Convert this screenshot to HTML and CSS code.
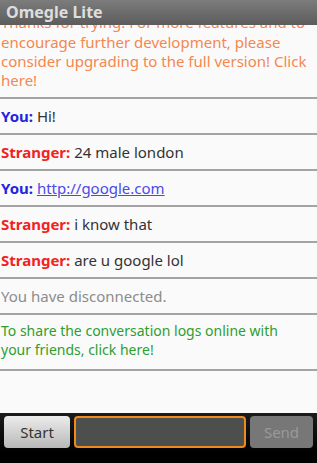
FILE: index.html
```html
<!DOCTYPE html>
<html>
<head>
<meta charset="utf-8">
<link rel="stylesheet" href="styles.css">
</head>
<body>
<div class="app">
  <div class="titlebar">Omegle Lite</div>
  <div class="log">
    <div class="list">
      <div class="row notice"><span class="hidden-line">Thanks for trying. For more features and to</span><br>encourage further development, please consider upgrading to the full version! Click here!</div>
      <div class="row"><span class="you">You:</span> Hi!</div>
      <div class="row"><span class="stranger">Stranger:</span> 24 male london</div>
      <div class="row"><span class="you">You:</span> <a class="link" href="#">http://google.com</a></div>
      <div class="row"><span class="stranger">Stranger:</span> i know that</div>
      <div class="row"><span class="stranger">Stranger:</span> are u google lol</div>
      <div class="row status">You have disconnected.</div>
      <div class="row share">To share the conversation logs online with<br>your friends, click here!</div>
    </div>
  </div>
  <div class="bar">
    <button class="btn start">Start</button>
    <div class="input"></div>
    <button class="btn send">Send</button>
  </div>
</div>
</body>
</html>
```

FILE: styles.css
```css
html, body {
  margin: 0;
  padding: 0;
  background: #000;
}
.app {
  width: 317px;
  height: 463px;
  display: flex;
  flex-direction: column;
  font-family: "Noto Sans", "Open Sans", sans-serif;
  overflow: hidden;
}
.titlebar {
  height: 25px;
  flex: none;
  background: linear-gradient(#7c7c7c, #5c5c5c);
  color: #dedede;
  font-weight: bold;
  font-size: 16px;
  line-height: 25px;
  padding-left: 6px;
  position: relative;
  z-index: 1;
}
.log {
  flex: 1;
  background: #fafafa;
  overflow: hidden;
}
.list {
  margin-top: -21px;
}
.row {
  font-size: 15px;
  line-height: 20px;
  padding: 7px 1px;
  color: #333;
  border-bottom: 2px solid #a4a4a4;
  white-space: nowrap;
}
.notice {
  color: #f5874f;
  white-space: normal;
  line-height: 19px;
  padding: 8px 1px 7px;
}
.notice .hidden-line {
  display: inline-block;
  line-height: 21px;
  vertical-align: top;
}
.you { color: #2424e0; font-weight: bold; }
.stranger { color: #f42222; font-weight: bold; }
.link { color: #4a4ae8; text-decoration: underline; }
.status { color: #8c8c8c; }
.share {
  color: #2e9e2e;
  white-space: normal;
  font-size: 14px;
  line-height: 19px;
  padding: 6px 1px 10px;
}
.bar {
  height: 50px;
  flex: none;
  background: linear-gradient(#1c1c1c, #000 80%);
  display: flex;
  align-items: flex-start;
  gap: 4px;
  padding: 3px 4px 0;
  box-sizing: border-box;
}
.btn {
  height: 32px;
  border: none;
  border-radius: 4px;
  font-family: "Noto Sans", "Open Sans", sans-serif;
  font-size: 15px;
  padding: 0;
}
.start {
  width: 66px;
  background: linear-gradient(#ececec, #b8b8b8);
  color: #333;
}
.input {
  flex: 1;
  height: 32px;
  box-sizing: border-box;
  border: 2px solid #f08a1c;
  border-radius: 4px;
  background: #4d4f4c;
}
.send {
  width: 63px;
  background: #777;
  color: #9a9a9a;
}
```
